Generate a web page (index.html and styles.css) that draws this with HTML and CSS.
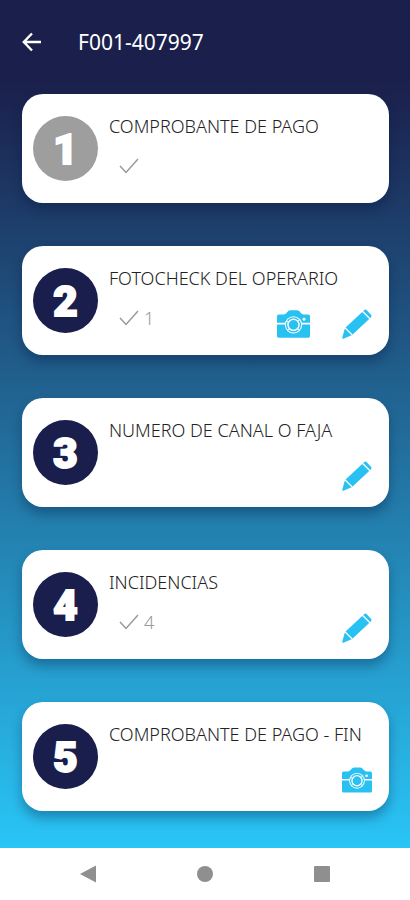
FILE: index.html
```
<!DOCTYPE html>
<html lang="es">
<head>
    <meta charset="UTF-8">
    <meta name="viewport" content="width=device-width, initial-scale=1.0">
    <title>F001-407997</title>
    <link rel="stylesheet" href="styles.css">
</head>
<body>
    <!-- iconos compartidos -->
    <svg class="sprite" aria-hidden="true">
        <symbol id="check" viewBox="0 0 20 16">
            <path d="M1 8 L7 14.5 L19 1" fill="none" stroke="currentColor" stroke-width="1.5"/>
        </symbol>
        <symbol id="pencil" viewBox="0 0 30 30">
            <path d="M22 1.2 Q23.4 -0.2 24.8 1.2 L29 5.8 Q30 7 28.8 8.4 L28.2 9 L21.2 2 Z"/>
            <path d="M20.2 3 L27.2 10 L10.6 25.4 L3.6 18.6 Z"/>
            <path d="M2.8 19.6 L9.6 26.2 L1.4 29.8 Q0 30 0.3 28.6 Z"/>
        </symbol>
        <symbol id="camera" viewBox="0 0 32 28">
            <path d="M0 12.8 V6.6 Q0 4.8 1.8 4.8 H6.6 Q8.4 4.6 9.6 2.8 Q11 0.6 13 0.6 H19.4 Q21.4 0.6 22.8 2.8 Q24 4.6 25.8 4.8 H30.2 Q32 4.8 32 6.6 V12.8 Z"/>
            <path d="M0 14.4 H32 V25.6 Q32 27.4 30.2 27.4 H1.8 Q0 27.4 0 25.6 Z"/>
            <circle cx="16" cy="14.8" r="8.4" fill="#fff"/>
            <circle cx="16" cy="14.8" r="7.4"/>
            <circle cx="16" cy="14.8" r="5.4" fill="none" stroke="#fff" stroke-width="1.4"/>
            <path d="M9 11 L11.6 12.4 M20.4 18.6 L22 20.6 M11.6 18.6 L10 20.6 M20.4 11 L22.4 9.2" stroke="#fff" stroke-width="1"/>
            <circle cx="26.2" cy="9.4" r="1.4" fill="#fff"/>
        </symbol>
    </svg>

    <div class="screen">
        <header class="topbar">
            <a href="#" class="back" aria-label="Volver">
                <svg viewBox="0 0 20 20"><path d="M19 10 H2 M10 1.5 L1.8 10 L10 18.5" fill="none" stroke="currentColor" stroke-width="2.4"/></svg>
            </a>
            <h1>F001-407997</h1>
        </header>

        <main class="steps">
            <section class="card">
                <span class="number done">1</span>
                <div class="info">
                    <h2>COMPROBANTE DE PAGO</h2>
                    <div class="status"><svg><use href="#check"/></svg></div>
                </div>
            </section>

            <section class="card">
                <span class="number">2</span>
                <div class="info">
                    <h2>FOTOCHECK DEL OPERARIO</h2>
                    <div class="status"><svg><use href="#check"/></svg>1</div>
                    <div class="actions">
                        <button type="button" aria-label="Tomar foto"><svg class="big"><use href="#camera"/></svg></button>
                        <button type="button" aria-label="Editar"><svg><use href="#pencil"/></svg></button>
                    </div>
                </div>
            </section>

            <section class="card">
                <span class="number">3</span>
                <div class="info">
                    <h2>NUMERO DE CANAL O FAJA</h2>
                    <div class="actions">
                        <button type="button" aria-label="Editar"><svg><use href="#pencil"/></svg></button>
                    </div>
                </div>
            </section>

            <section class="card">
                <span class="number">4</span>
                <div class="info">
                    <h2>INCIDENCIAS</h2>
                    <div class="status"><svg><use href="#check"/></svg>4</div>
                    <div class="actions">
                        <button type="button" aria-label="Editar"><svg><use href="#pencil"/></svg></button>
                    </div>
                </div>
            </section>

            <section class="card">
                <span class="number">5</span>
                <div class="info">
                    <h2>COMPROBANTE DE PAGO - FIN</h2>
                    <div class="actions">
                        <button type="button" aria-label="Tomar foto"><svg><use href="#camera"/></svg></button>
                    </div>
                </div>
            </section>
        </main>
    </div>

    <nav class="navbar">
        <button type="button" aria-label="Atrás"><svg viewBox="0 0 18 18"><path d="M1 9 L17 0.5 V17.5 Z"/></svg></button>
        <button type="button" aria-label="Inicio"><svg viewBox="0 0 18 18"><circle cx="9" cy="9" r="8"/></svg></button>
        <button type="button" aria-label="Recientes"><svg viewBox="0 0 18 18"><rect x="1" y="1" width="16" height="16" rx="1"/></svg></button>
    </nav>
</body>
</html>
```
FILE: styles.css
```
* {
    box-sizing: border-box;
}
body {
    margin: 0;
    min-height: 100vh;
    display: flex;
    flex-direction: column;
    font-family: "Noto Sans", "Open Sans", sans-serif;
    background-color: #fff;
}
h1, h2 {
    margin: 0;
}
button {
    display: flex;
    margin: 0; padding: 0;
    border: none;
    background: none;
    color: inherit;
    cursor: pointer;
}
svg {
    display: block;
    fill: currentColor;
}
.sprite {
    position: absolute;
    width: 0;
    height: 0;
}

.screen {
    flex: 1;
    padding: 0 21px 36px 22px;
    background: linear-gradient(#1b1f4b 80px, #29c5f6);
}

/* cabecera */
.topbar {
    display: flex;
    align-items: center;
    gap: 36px;
    height: 94px;
    padding-bottom: 10px;
    color: #fff;
}
.back {
    color: inherit;
}
.back svg {
    width: 20px;
    height: 20px;
}
.topbar h1 {
    font-size: 21px;
    font-weight: 400;
    line-height: 28px;
}

/* tarjetas */
.steps {
    display: flex;
    flex-direction: column;
    gap: 43px;
}
.card {
    display: flex;
    align-items: center;
    gap: 11px;
    height: 109px;
    padding: 0 17px 0 11px;
    border-radius: 21px;
    background-color: #fff;
    box-shadow: 0 7px 12px rgba(0, 20, 60, 0.33);
}
.number {
    display: flex;
    flex: none;
    align-items: center;
    justify-content: center;
    width: 65px;
    height: 65px;
    padding-top: 2px;
    border-radius: 50%;
    background-color: #1a1e4d;
    color: #fff;
    font-family: Roboto, "Open Sans", sans-serif;
    font-size: 42px;
    font-weight: 900;
    line-height: 63px;
    -webkit-text-stroke: 2px #fff;
}
.number.done {
    background-color: #9e9e9e;
}
.info {
    flex: 1;
    display: grid;
    grid-template-columns: auto 1fr;
    grid-template-rows: 24px 1fr;
    height: 100%;
    padding: 20px 0 16px;
}
.info h2 {
    grid-column: 1 / 3;
    color: #222;
    font-size: 18px;
    font-weight: 300;
    line-height: 24px;
    white-space: nowrap;
}
.status {
    display: flex;
    align-items: center;
    gap: 5px;
    height: 24px;
    margin: 16px 0 0 10px;
    color: #999;
    font-size: 18px;
    font-weight: 300;
}
.status svg {
    width: 20px;
    height: 16px;
}
.actions {
    grid-column: 2;
    display: flex;
    align-items: flex-end;
    justify-content: flex-end;
    gap: 32px;
    color: #29c1f1;
}
.actions svg {
    width: 30px;
    height: 30px;
}
.actions svg.big {
    width: 33px;
}

/* barra de navegacion */
.navbar {
    display: flex;
    height: 52px;
    padding: 0 30px;
    color: #8f8f8f;
}
.navbar button {
    flex: 1;
    align-items: center;
    justify-content: center;
}
.navbar svg {
    width: 18px;
    height: 18px;
}
```
